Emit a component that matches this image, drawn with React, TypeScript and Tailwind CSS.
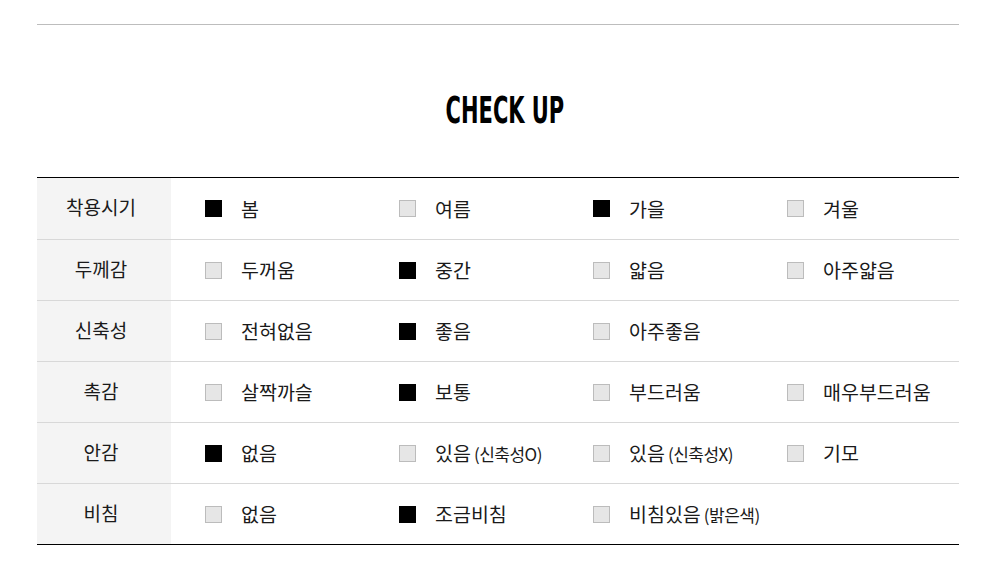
const ROWS: { label: string; items: { text: string; note?: string; on?: boolean }[] }[] = [
  { label: '착용시기', items: [{ text: '봄', on: true }, { text: '여름' }, { text: '가을', on: true }, { text: '겨울' }] },
  { label: '두께감', items: [{ text: '두꺼움' }, { text: '중간', on: true }, { text: '얇음' }, { text: '아주얇음' }] },
  { label: '신축성', items: [{ text: '전혀없음' }, { text: '좋음', on: true }, { text: '아주좋음' }] },
  { label: '촉감', items: [{ text: '살짝까슬' }, { text: '보통', on: true }, { text: '부드러움' }, { text: '매우부드러움' }] },
  { label: '안감', items: [{ text: '없음', on: true }, { text: '있음', note: '(신축성O)' }, { text: '있음', note: '(신축성X)' }, { text: '기모' }] },
  { label: '비침', items: [{ text: '없음' }, { text: '조금비침', on: true }, { text: '비침있음', note: '(밝은색)' }] },
]

export default function App() {
  return (
    <div className="w-[999px] h-[566px] bg-white font-['Noto_Sans_CJK_KR',sans-serif] text-[#1a1a1a]">
      <div className="pt-[24px] px-[37px] pr-[40px]">
        <div className="border-t border-[#bdbdbd]" />
        <h2 className="mt-[66px] mb-[46px] pl-[22px] text-center text-[37px] leading-[40px] font-bold text-black font-['DejaVu_Sans_Condensed',sans-serif] scale-x-[0.63]">
          CHECK UP
        </h2>
        <div className="border-t border-b border-black">
          {ROWS.map((row, i) => (
            <div key={row.label} className={i > 0 ? 'flex h-[61px] border-t border-[#d8d8d8]' : 'flex h-[61px]'}>
              <div className="w-[134px] shrink-0 bg-[#f4f4f4] flex items-center justify-center text-[19px] pb-[2px] pr-[6px]">
                {row.label}
              </div>
              <div className="flex items-center pl-[34px]">
                {row.items.map((it, j) => (
                  <div key={j} className="w-[194px] flex items-center gap-[19px]">
                    <span className={it.on ? 'w-[17px] h-[17px] bg-black' : 'w-[17px] h-[17px] bg-[#e6e6e6] border border-[#bcbcbc]'} />
                    <span className="text-[19.5px] leading-none">
                      {it.text}
                      {it.note && <span className="ml-[3px] text-[17px] tracking-[-0.5px]">{it.note}</span>}
                    </span>
                  </div>
                ))}
              </div>
            </div>
          ))}
        </div>
      </div>
    </div>
  )
}
